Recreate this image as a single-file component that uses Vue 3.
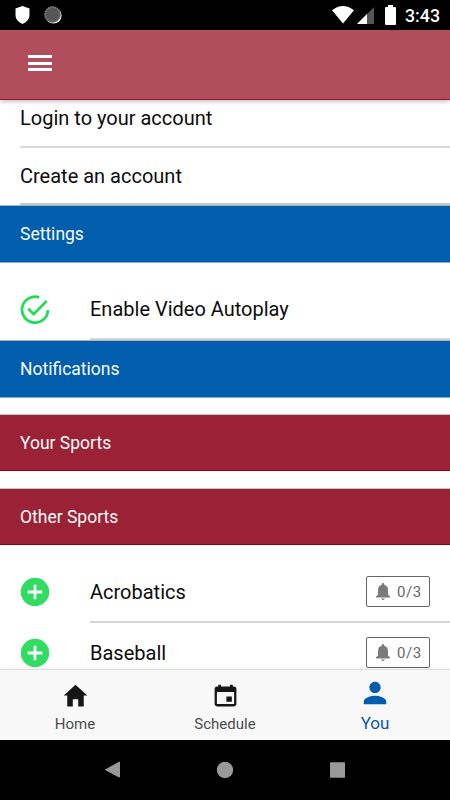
<script setup>
const sports = ['Acrobatics', 'Baseball']
</script>

<template>
  <div class="screen">
    <div class="status">
      <svg class="shield" viewBox="0 0 16 18"><path d="M8 0 15 2.600V9c0 4.200-3.200 7.400-7 9-3.800-1.600-7-4.800-7-9V2.600z" fill="#fff" /></svg>
      <svg class="sync" viewBox="0 0 18 18">
        <circle cx="9.500" cy="9.500" r="8.100" fill="#fff" />
        <circle cx="8.500" cy="8.500" r="8.300" fill="#555" />
        <circle cx="8.500" cy="8.500" r="7.300" fill="none" stroke="#858585" stroke-width="1.700" stroke-dasharray="1 1.300" />
      </svg>
      <span class="spacer"></span>
      <svg class="wifi" viewBox="0 0 22 18"><path d="M0 4.300Q11-4.300 22 4.300L11 17.500z" fill="#fff" /></svg>
      <svg class="signal" viewBox="0 0 17 17"><path d="M17 0v17H0z" fill="#555" /><path d="M10 7v10H0z" fill="#fff" /></svg>
      <svg class="battery" viewBox="0 0 11 20"><path d="M3 0h5v2h2q1 0 1 1v16q0 1-1 1H1q-1 0-1-1V3q0-1 1-1h2z" fill="#fff" /></svg>
      <span class="clock">3:43</span>
    </div>

    <header class="toolbar">
      <div class="menu"><i></i><i></i><i></i></div>
    </header>

    <main class="content">
      <div class="row login"><span class="label">Login to your account</span></div>
      <div class="row create"><span class="label">Create an account</span></div>
      <h2 class="band blue">Settings</h2>
      <div class="item autoplay">
        <div class="icon">
          <svg viewBox="0 0 30 30" fill="none" stroke="#1edc55" stroke-width="2.700">
            <path d="M19.200 2.400A13 13 0 1 0 28 15" /><path d="m8.300 13.800 5.400 5.400L26.800 5.900" />
          </svg>
        </div>
        <div class="body"><span class="label">Enable Video Autoplay</span></div>
      </div>
      <h2 class="band blue">Notifications</h2>
      <div class="gap"></div>
      <h2 class="band red">Your Sports</h2>
      <div class="gap"></div>
      <h2 class="band red">Other Sports</h2>
      <div v-for="(s, i) in sports" :key="s" class="item sport" :class="{ first: i === 0 }">
        <div class="icon">
          <svg viewBox="0 0 30 30"><circle cx="15" cy="15" r="14.200" fill="#30dc62" /><path d="M15 7.700v14.600M7.700 15h14.600" stroke="#fff" stroke-width="2.800" /></svg>
        </div>
        <div class="body">
          <span class="label">{{ s }}</span>
          <div class="badge">
            <svg viewBox="0 0 14 17" fill="#7b7b7b"><path d="M7 0q1.200 0 1.200 1.200v.6Q12 2.800 12 7v4.600l2 2V14.500H0v-.9l2-2V7q0-4.200 3.800-5.200v-.6Q5.800 0 7 0zM5.200 15.400h3.600Q8.300 17 7 17t-1.800-1.600z" /></svg>
            <span>0/3</span>
          </div>
        </div>
      </div>
    </main>

    <nav class="tabs">
      <div class="tab">
        <svg viewBox="0 0 512 512"><path d="M208 448V320h96v128h97.600V256H464L256 64 48 256h62.400v192z" fill="#161616" /></svg>
        <span>Home</span>
      </div>
      <div class="tab">
        <svg viewBox="0 0 512 512"><path d="M368 272h-96v96h96v-96zM336 64v32H176V64h-48v32h-24c-22 0-40 18-40 40v272c0 22 18 40 40 40h304c22 0 40-18 40-40V136c0-22-18-40-40-40h-24V64h-48zm72 344H104V196h304v212z" fill="#161616" /></svg>
        <span>Schedule</span>
      </div>
      <div class="tab active">
        <svg viewBox="0 0 512 512"><path d="M256 256c52.800 0 96-43.200 96-96s-43.200-96-96-96-96 43.200-96 96 43.200 96 96 96zm0 48c-63.600 0-192 32.400-192 96v48h384v-48c0-63.600-128.400-96-192-96z" fill="#005eac" /></svg>
        <span>You</span>
      </div>
    </nav>

    <div class="system">
      <div><svg viewBox="0 0 18 18"><path d="M16 1.300v14.400q0 1-1 .7L1.500 9.300q-.8-.5 0-1L15 .7q1-.4 1 .6z" fill="#999" /></svg></div>
      <div><svg viewBox="0 0 18 18"><circle cx="9" cy="9" r="8.200" fill="#999" /></svg></div>
      <div><svg viewBox="0 0 18 18"><rect x="1" y="1.200" width="15" height="15.500" rx=".7" fill="#999" /></svg></div>
    </div>
  </div>
</template>

<style>
body { margin: 0; background: #fff; }
</style>

<style scoped>
.screen { width: 450px; height: 800px; display: flex; flex-direction: column; overflow: hidden; background: #fff; color: #0c0c0c; font-family: Roboto, sans-serif; }
.screen * { box-sizing: border-box; }
svg { display: block; flex: none; }
.status { height: 30px; flex: none; background: #000; display: flex; align-items: center; padding: 0 10px 0 14px; }
.shield { width: 17px; height: 18px; }
.sync { width: 18px; height: 18px; margin-left: 13px; }
.spacer { flex: 1; }
.wifi { width: 22px; height: 18px; margin-right: 3px; }
.signal { width: 17px; height: 17px; margin: 1px 11px 0 0; }
.battery { width: 11px; height: 20px; margin-right: 9px; }
.clock { color: #fff; font-size: 17.800px; font-weight: 500; line-height: 20px; width: 35px; white-space: nowrap; margin-top: 2px; }
.toolbar { height: 70px; flex: none; background: #b04e5c; border-bottom: 1px solid #a60b30; padding: 25px 28px; box-shadow: 0 1px 5px rgba(0,0,0,.3); z-index: 1; }
.menu { width: 24px; display: flex; flex-direction: column; gap: 3.500px; }
.menu i { height: 3px; background: #fff; }
.content { height: 569px; flex: none; overflow: hidden; display: flex; flex-direction: column; }
.label { font-size: 20px; line-height: 24px; white-space: nowrap; }
.row { flex: none; margin-left: 20px; border-bottom: 2px solid #d8dada; display: flex; align-items: center; }
.login { height: 48px; padding-bottom: 10px; }
.create { height: 57px; border-bottom-color: #c8cbcc; }
.band { flex: none; height: 58px; margin: 0; border-top: 1px solid #a5b3c5; border-bottom: 1px solid #88a7c8; padding: 0 20px; font-size: 17.500px; line-height: 56px; font-weight: 400; color: #f8fafc; white-space: nowrap; }
.blue { background: #005eac; }
.red { background: #9b2235; border-top-color: #c7c7c7; border-bottom-color: #96000b; height: 57px; line-height: 57px; }
.gap { height: 16px; flex: none; }
.red + .gap { height: 17px; }
.item { display: flex; flex: none; padding-left: 20px; }
.icon { width: 70px; display: flex; align-items: center; }
.icon svg { width: 30px; height: 30px; }
.body { flex: 1; display: flex; align-items: center; justify-content: space-between; border-bottom: 2px solid #d3d5d5; padding-right: 20px; }
.autoplay { height: 77px; }
.autoplay .icon, .autoplay .body { padding-top: 17px; }
.sport { height: 61px; }
.sport .icon { padding-bottom: 1px; }
.sport .body { padding-top: 1px; }
.first { height: 78px; }
.first .icon { padding-top: 17px; }
.first .body { padding-top: 18px; }
.badge { width: 64px; height: 31px; margin-bottom: 1px; border: 1px solid #666; border-radius: 2px; display: flex; align-items: center; padding-left: 9px; gap: 7px; color: #686868; font-size: 15px; letter-spacing: .6px; }
.badge svg { width: 14px; height: 17px; }
.tabs { height: 71px; flex: none; display: flex; background: #f8f8f8; border-top: 1px solid #dedede; z-index: 1; box-shadow: 0 -1px 2px rgba(0,0,0,.06); }
.tab { flex: 1; display: flex; flex-direction: column; align-items: center; padding-top: 10.500px; color: #4c4c4c; font-size: 15px; line-height: 20px; }
.tab svg { width: 29px; height: 29px; margin-bottom: 4px; }
.tab.active { padding-top: 7.500px; color: #0a56a8; font-size: 17px; }
.tab.active svg { width: 30px; height: 30px; margin-bottom: 5px; }
.system { height: 60px; flex: none; background: #000; display: grid; grid-template-columns: repeat(3, 112.500px); justify-content: center; align-items: center; justify-items: center; }
.system svg { width: 18px; height: 18px; }
</style>
